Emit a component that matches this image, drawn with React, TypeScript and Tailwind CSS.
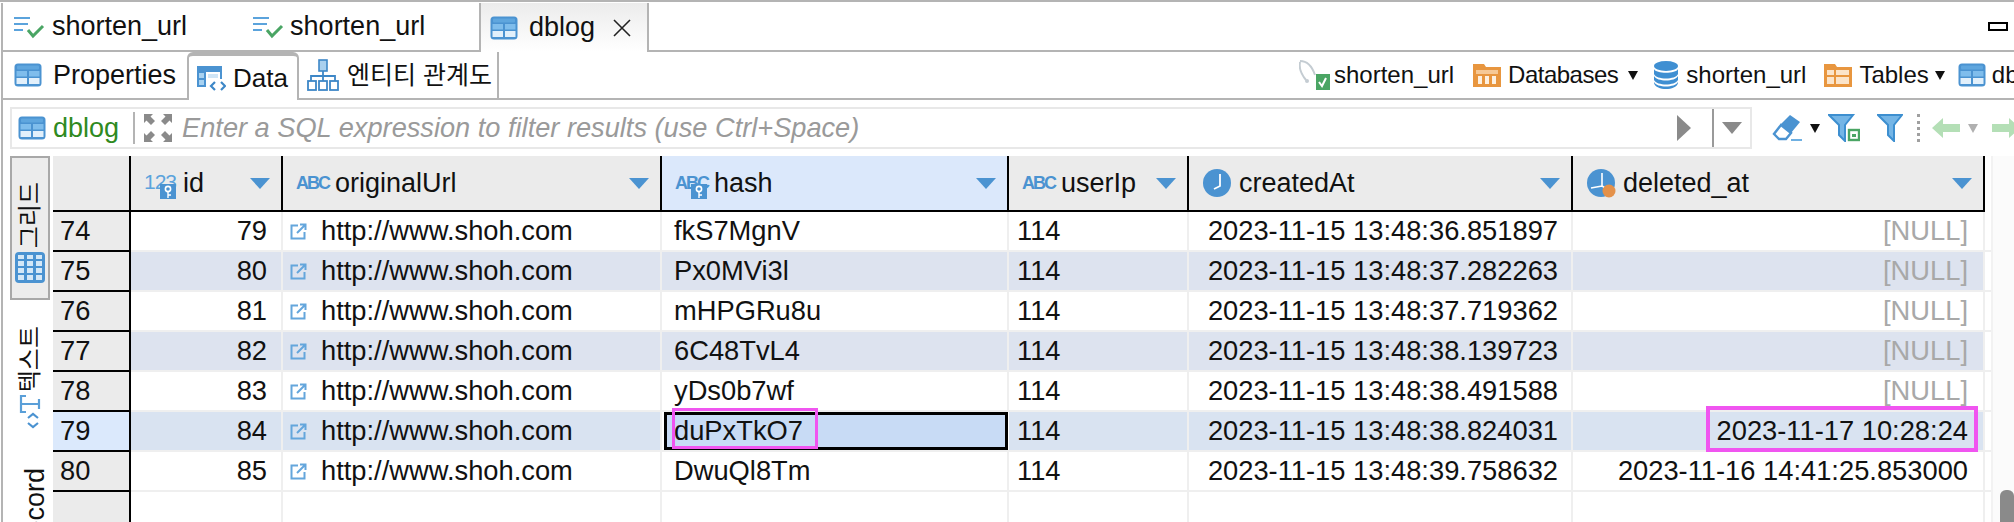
import type { ReactNode } from 'react';

const rows = [
  { no: 74, id: 79, hash: 'fkS7MgnV', created: '2023-11-15 13:48:36.851897', deleted: null },
  { no: 75, id: 80, hash: 'Px0MVi3l', created: '2023-11-15 13:48:37.282263', deleted: null },
  { no: 76, id: 81, hash: 'mHPGRu8u', created: '2023-11-15 13:48:37.719362', deleted: null },
  { no: 77, id: 82, hash: '6C48TvL4', created: '2023-11-15 13:48:38.139723', deleted: null },
  { no: 78, id: 83, hash: 'yDs0b7wf', created: '2023-11-15 13:48:38.491588', deleted: null },
  { no: 79, id: 84, hash: 'duPxTkO7', created: '2023-11-15 13:48:38.824031', deleted: '2023-11-17 10:28:24' },
  { no: 80, id: 85, hash: 'DwuQl8Tm', created: '2023-11-15 13:48:39.758632', deleted: '2023-11-16 14:41:25.853000' },
];

function TableIcon() {
  return (
    <svg width="28" height="24" viewBox="0 0 28 24" className="shrink-0">
      <rect x="0.5" y="0.5" width="27" height="23" rx="3.5" fill="#4b93d1" />
      <rect x="3" y="2.5" width="22" height="4" rx="1" fill="#5fa6de" />
      <rect x="2.5" y="8" width="10.5" height="5.5" fill="#7fbdec" />
      <rect x="15" y="8" width="10.5" height="5.5" fill="#7fbdec" />
      <rect x="2.5" y="15" width="10.5" height="6" fill="#e2f0fb" />
      <rect x="15" y="15" width="10.5" height="6" fill="#e2f0fb" />
    </svg>
  );
}

function ScriptIcon() {
  return (
    <svg width="32" height="24" viewBox="0 0 32 24" className="shrink-0">
      <path d="M1 3h16M1 9h14M1 15h9" stroke="#5ba3dc" strokeWidth="2" fill="none" />
      <path d="M15 15l5 6 10-10" stroke="#4aa564" strokeWidth="3" fill="none" />
    </svg>
  );
}

function DataIcon() {
  return (
    <svg width="30" height="26" viewBox="0 0 30 26" className="shrink-0">
      <path d="M1 1h25v13h-2V7H10v15H1z" fill="#4b93d1" />
      <path d="M3 8h5v5H3zM3 15h5v5H3z" fill="#a8d2f1" />
      <path d="M12 9h10v4H12z" fill="#cfe5f6" />
      <path d="M19 17l-4 4 4 4M25 17l4 4-4 4" stroke="#3d87c7" strokeWidth="2.2" fill="none" />
    </svg>
  );
}

function EntityIcon() {
  return (
    <svg width="32" height="32" viewBox="0 0 32 32" className="shrink-0">
      <rect x="12" y="1" width="8" height="11" fill="#a9d0ee" stroke="#3d87c7" strokeWidth="1.6" />
      <path d="M16 12v5M4 22v-5h24v5M16 17v5" stroke="#3d87c7" strokeWidth="1.8" fill="none" />
      <rect x="1" y="22" width="8" height="9" fill="#fff" stroke="#3d87c7" strokeWidth="1.8" />
      <rect x="12" y="22" width="8" height="9" fill="#fff" stroke="#3d87c7" strokeWidth="1.8" />
      <rect x="23" y="22" width="8" height="9" fill="#fff" stroke="#3d87c7" strokeWidth="1.8" />
    </svg>
  );
}

function ExpandIcon() {
  return (
    <svg width="30" height="30" viewBox="0 0 30 30" className="shrink-0">
      <path d="M1 1h9L7.500 3.500 12 8l-4 4-4.500-4.500L1 10zM29 1v9l-2.500-2.500L22 12l-4-4 4.500-4.500L20 1zM1 29v-9l2.500 2.500L8 18l4 4-4.500 4.500L10 29zM29 29h-9l2.500-2.500L18 22l4-4 4.500 4.500L29 20z" fill="#8a8a8a" />
    </svg>
  );
}

function EraserIcon() {
  return (
    <svg width="32" height="28" viewBox="0 0 32 28" className="shrink-0">
      <path d="M18 1l10 7-9 11-11-8z" fill="#4b93d1" />
      <path d="M9 11l10 8-5 6H7l-5-5z" fill="#fff" stroke="#4b93d1" strokeWidth="2.4" />
      <path d="M19 26h11" stroke="#6fb0e2" strokeWidth="2" />
    </svg>
  );
}

function FunnelIcon({ plus }: { plus?: boolean }) {
  return (
    <svg width={plus ? 32 : 26} height="28" viewBox={plus ? '0 0 32 28' : '0 0 26 28'} className="shrink-0">
      <path d="M1 1h24L17 11v16l-6-6V11z" fill="#74b5e6" stroke="#3d8fd0" strokeWidth="2" />
      {plus && <rect x="21" y="16" width="10" height="10" fill="#fff" stroke="#4aa564" strokeWidth="2.4" />}
      {plus && <rect x="24" y="20" width="4" height="3" fill="#4aa564" />}
    </svg>
  );
}

function ArrowIcon({ right }: { right?: boolean }) {
  return (
    <svg width="28" height="22" viewBox="0 0 28 22" className={right ? 'shrink-0 rotate-180' : 'shrink-0'}>
      <path d="M0 11L11 1v6h17v8H11v6z" fill="#b4dfb6" />
    </svg>
  );
}

function SmallArrow({ color = '#111' }: { color?: string }) {
  return (
    <svg width="10" height="9" viewBox="0 0 10 9" className="shrink-0">
      <path d="M0 0h10L5 9z" fill={color} />
    </svg>
  );
}

function SortArrow() {
  return (
    <svg width="20" height="11" viewBox="0 0 20 11" className="shrink-0">
      <path d="M0 0h20L10 11z" fill="#4b93d1" />
    </svg>
  );
}

function ConnIcon() {
  return (
    <svg width="32" height="30" viewBox="0 0 32 30" className="shrink-0">
      <path d="M1 1c7 0 12 5 15 14M1 2c-1 5 1 12 6 18" stroke="#c4ccd2" strokeWidth="2" fill="none" />
      <circle cx="8" cy="21" r="2" fill="#c4ccd2" />
      <rect x="17" y="14" width="14" height="16" fill="#4aa564" />
      <path d="M20 22l3 4 4-8" stroke="#fff" strokeWidth="2" fill="none" />
    </svg>
  );
}

function DatabasesIcon() {
  return (
    <svg width="28" height="24" viewBox="0 0 28 24" className="shrink-0">
      <path d="M0 1h11l2 3h15v20H0z" fill="#e8963f" />
      <rect x="3" y="7" width="22" height="4" fill="#f6c895" />
      <path d="M5 13h4v8H5zM12 13h4v8h-4zM19 13h4v8h-4z" fill="#fdf0e0" />
    </svg>
  );
}

function DbIcon() {
  return (
    <svg width="26" height="28" viewBox="0 0 26 28" className="shrink-0">
      <ellipse cx="13" cy="5" rx="12" ry="5" fill="#3f8fd2" />
      <path d="M1 8c2 5 22 5 24 0v5c-2 6-22 6-24 0z" fill="#3f8fd2" />
      <path d="M1 15c3 6 21 6 24 0v4c-3 6-21 6-24 0z" fill="#3f8fd2" />
      <path d="M1 21c3 6 21 6 24 0v1c-2 8-22 8-24 0z" fill="#3f8fd2" />
    </svg>
  );
}

function TablesIcon() {
  return (
    <svg width="28" height="24" viewBox="0 0 28 24" className="shrink-0">
      <path d="M0 1h11l2 3h15v20H0z" fill="#e8963f" />
      <path d="M3 7h7v5H3zM12 7h13v5H12zM3 14h7v7H3zM12 14h13v7H12z" fill="#fbe4ca" />
    </svg>
  );
}

function LinkIcon() {
  return (
    <svg width="17" height="17" viewBox="0 0 17 17" className="shrink-0">
      <path d="M8 2.500H1.500v13h13V9" stroke="#64a6dc" strokeWidth="2" fill="none" />
      <path d="M10 1.500h5.500V7M15 2L7 10" stroke="#64a6dc" strokeWidth="2" fill="none" />
    </svg>
  );
}

function KeyBadge() {
  return (
    <span className="absolute right-0 bottom-0 flex h-[15px] w-[16px] items-center justify-center bg-[#4b93d1]">
      <svg width="8" height="13" viewBox="0 0 8 13">
        <circle cx="4" cy="4" r="2.600" stroke="#fff" strokeWidth="1.600" fill="none" />
        <path d="M4 7v6M4 10h3" stroke="#fff" strokeWidth="1.400" />
      </svg>
    </span>
  );
}

function TypeLabel({ text, keyed, small }: { text: string; keyed?: boolean; small?: boolean }) {
  return (
    <span className="relative flex h-[32px] w-[32px] shrink-0 items-start">
      <span className={small ? 'mt-[7px] text-[18px] leading-[18px] font-bold tracking-[-2px] text-[#4b93d1]' : 'mt-[5px] text-[21px] leading-[20px] tracking-[-1px] text-[#5ba3dc]'}>{text}</span>
      {keyed && <KeyBadge />}
    </span>
  );
}

function ClockIcon({ dot }: { dot?: boolean }) {
  return (
    <svg width="30" height="30" viewBox="0 0 30 30" className="shrink-0">
      <circle cx="15" cy="15" r="14" fill="#4b93d1" />
      {dot ? (
        <>
          <path d="M16 5v13M5 20l11-2M16 18l5 3" stroke="#fff" strokeWidth="1.600" fill="none" />
          <circle cx="23" cy="23" r="6.500" fill="#e4914a" />
        </>
      ) : (
        <path d="M18 6v12l-6 3" stroke="#fff" strokeWidth="1.800" fill="none" />
      )}
    </svg>
  );
}

function HeaderCell({ w, icon, label, active }: { w: string; icon: ReactNode; label: string; active?: boolean }) {
  return (
    <div className={`${w} flex h-[56px] shrink-0 items-center border-r-2 border-b-2 border-black pr-[11px] pl-[13px] ${active ? 'bg-[#dbe8fb]' : 'bg-[#ebebeb]'}`}>
      {icon}
      <span className="ml-[7px] flex-1 text-[27px] leading-none">{label}</span>
      <SortArrow />
    </div>
  );
}

function Cell({ w, children, right, bg }: { w: string; children?: ReactNode; right?: boolean; bg: string }) {
  return (
    <div className={`${w} flex h-full shrink-0 items-center border-r-2 border-[#efefef] ${right ? 'justify-end' : ''} ${bg}`}>{children}</div>
  );
}

export default function App() {
  return (
    <div className="relative h-[522px] w-[2014px] overflow-hidden border-t-2 border-[#b4b4b4] bg-white pt-px pl-px font-['Liberation_Sans','Noto_Sans_CJK_KR',sans-serif] text-[#111]">
      <div className="h-full w-[2013px] border-l-2 border-[#b4b4b4]">
        {/* editor tabs */}
        <div className="flex h-[49px] items-stretch">
          <div className="flex w-[476px] shrink-0 items-center border-b-2 border-[#b4b4b4] pl-[10px]">
            <ScriptIcon />
            <span className="ml-[7px] text-[27px] leading-none">shorten_url</span>
            <span className="ml-[65px]"><ScriptIcon /></span>
            <span className="ml-[6px] text-[27px] leading-none">shorten_url</span>
          </div>
          <div className="flex w-[170px] shrink-0 items-center border-r-2 border-l-2 border-[#b4b4b4] bg-gradient-to-b from-[#ececec] to-white pl-[9px]">
            <TableIcon />
            <span className="ml-[11px] text-[27px] leading-none">dblog</span>
            <svg width="18" height="18" viewBox="0 0 18 18" className="ml-[18px]">
              <path d="M1 1l16 16M17 1L1 17" stroke="#222" strokeWidth="1.600" />
            </svg>
          </div>
          <div className="flex flex-1 items-center justify-end border-b-2 border-[#b4b4b4] pr-[3px]">
            <div className="mr-[3px] h-[9px] w-[20px] border-2 border-black bg-white" />
          </div>
        </div>

        {/* sub tabs and breadcrumb */}
        <div className="flex h-[48px] items-stretch border-b-2 border-[#b4b4b4]">
          <div className="flex w-[184px] shrink-0 items-center pl-[11px]">
            <TableIcon />
            <span className="ml-[11px] text-[27px] leading-none">Properties</span>
          </div>
          <div className="-mb-[2px] flex w-[112px] shrink-0 items-center rounded-t-[6px] border-t-[4px] border-r-2 border-l-2 border-[#b4b4b4] bg-white pl-[7px]">
            <DataIcon />
            <span className="ml-[7px] text-[26px] leading-none">Data</span>
          </div>
          <div className="flex w-[200px] shrink-0 items-center border-r-2 border-[#b4b4b4] pl-[8px]">
            <EntityIcon />
            <span className="ml-[8px] text-[25px] leading-none whitespace-nowrap">엔티티 관계도</span>
          </div>
          <div className="flex min-w-0 flex-1 items-center pl-[800px] text-[24px] leading-none whitespace-nowrap">
            <ConnIcon />
            <span className="ml-[3px]">shorten_url</span>
            <span className="ml-[19px]"><DatabasesIcon /></span>
            <span className="ml-[7px] tracking-[-0.5px]">Databases</span>
            <span className="ml-[10px]"><SmallArrow /></span>
            <span className="ml-[15px]"><DbIcon /></span>
            <span className="ml-[7px]">shorten_url</span>
            <span className="ml-[18px]"><TablesIcon /></span>
            <span className="ml-[7px]">Tables</span>
            <span className="ml-[6px]"><SmallArrow /></span>
            <span className="ml-[13px]"><TableIcon /></span>
            <span className="ml-[6px]">db</span>
          </div>
        </div>

        {/* filter bar */}
        <div className="flex h-[56px] items-center pl-[7px]">
          <div className="flex h-[42px] w-[1742px] shrink-0 items-center border-2 border-[#e8e8e8] pl-[6px]">
            <TableIcon />
            <span className="ml-[7px] text-[27px] leading-none text-[#2f8a1f]">dblog</span>
            <div className="ml-[14px] h-[32px] w-[2px] bg-[#b4b4b4]" />
            <span className="ml-[8px]"><ExpandIcon /></span>
            <span className="ml-[9px] flex-1 text-[27.2px] leading-none text-[#9a9a9a] italic">Enter a SQL expression to filter results (use Ctrl+Space)</span>
            <svg width="14" height="26" viewBox="0 0 14 26" className="shrink-0">
              <path d="M0 0l14 13L0 26z" fill="#8a8a8a" />
            </svg>
            <div className="ml-[21px] h-[38px] w-[2px] bg-[#9a9a9a]" />
            <svg width="20" height="12" viewBox="0 0 20 12" className="mr-[8px] ml-[8px] shrink-0">
              <path d="M0 0h20L10 12z" fill="#8a8a8a" />
            </svg>
          </div>
          <div className="ml-[20px] flex items-center">
            <EraserIcon />
            <span className="ml-[6px]"><SmallArrow /></span>
            <span className="ml-[8px]"><FunnelIcon plus /></span>
            <span className="ml-[17px]"><FunnelIcon /></span>
            <div className="ml-[14px] h-[28px] w-0 border-l-[3px] border-dotted border-[#a0a0a0]" />
            <span className="ml-[12px]"><ArrowIcon /></span>
            <span className="ml-[8px]"><SmallArrow color="#b0b0b0" /></span>
            <span className="ml-[14px]"><ArrowIcon right /></span>
          </div>
        </div>

        {/* body */}
        <div className="flex h-[367px] items-start">
          {/* view switcher */}
          <div className="flex w-[50px] shrink-0 flex-col items-center pl-[3px] text-[24px] leading-none">
            <div className="flex h-[144px] w-[40px] flex-col items-center justify-end gap-[4px] border-2 border-[#a8a8a8] bg-[#ececec] pb-[15px]">
              <span className="rotate-180 [text-orientation:sideways] [writing-mode:vertical-rl]">그리드</span>
              <svg width="30" height="31" viewBox="0 0 30 31" className="shrink-0">
                <rect width="30" height="31" rx="4" fill="#4b93d1" />
                <path d="M3 9h6v5H3zM12 9h6v5h-6zM21 9h6v5h-6zM3 16h6v5H3zM12 16h6v5h-6zM21 16h6v5h-6zM3 23h6v5H3zM12 23h6v5h-6zM21 23h6v5h-6zM3 3h6v4H3zM12 3h6v4h-6zM21 3h6v4h-6z" fill="#d5e8f7" />
              </svg>
            </div>
            <div className="mt-[26px] flex w-[40px] flex-col items-center gap-[3px]">
              <span className="rotate-180 [text-orientation:sideways] [writing-mode:vertical-rl]">텍스트</span>
              <svg width="22" height="34" viewBox="0 0 22 34" className="shrink-0">
                <path d="M7 1H2v16h5M2 9h18M20 4v10" stroke="#5a9fd8" strokeWidth="2.2" fill="none" />
                <path d="M9 23l5-4 5 4M9 28l5 4 5-4" stroke="#4b93d1" strokeWidth="2.2" fill="none" />
              </svg>
            </div>
            <div className="mt-[39px] flex w-[40px] items-start justify-center">
              <span className="ml-[12px] rotate-180 text-[27px] [text-orientation:sideways] [writing-mode:vertical-rl]">Record</span>
            </div>
          </div>

          {/* result grid */}
          <div className="w-[1932px] shrink-0">
            <div className="flex">
              <div className="h-[56px] w-[78px] shrink-0 border-r-2 border-b-2 border-black bg-[#ebebeb]" />
              <HeaderCell w="w-[152px]" icon={<TypeLabel text="123" keyed />} label="id" />
              <HeaderCell w="w-[379px]" icon={<TypeLabel text="ABC" small />} label="originalUrl" />
              <HeaderCell w="w-[347px]" icon={<TypeLabel text="ABC" small keyed />} label="hash" active />
              <HeaderCell w="w-[180px]" icon={<TypeLabel text="ABC" small />} label="userIp" />
              <HeaderCell w="w-[384px]" icon={<ClockIcon />} label="createdAt" />
              <HeaderCell w="w-[412px]" icon={<ClockIcon dot />} label="deleted_at" />
            </div>
            {rows.map((r, i) => {
              const selected = r.no === 79;
              const bg = selected ? 'bg-[#d9e3f1]' : i % 2 === 1 ? 'bg-[#dde3ef]' : 'bg-white';
              return (
                <div key={r.no} className="flex h-[40px] border-b-2 border-[#efefef] text-[27.3px] leading-none">
                  <div className={`-mb-[2px] flex h-[40px] w-[78px] shrink-0 items-center border-r-2 border-b-2 border-black pl-[7px] ${selected ? 'bg-[#dbe9fc]' : 'bg-[#ebebeb]'}`}>{r.no}</div>
                  <Cell w="w-[152px]" right bg={bg}><span className="pr-[14px]">{r.id}</span></Cell>
                  <Cell w="w-[379px]" bg={bg}>
                    <span className="ml-[7px]"><LinkIcon /></span>
                    <span className="ml-[14px]">http://www.shoh.com</span>
                  </Cell>
                  {selected ? (
                    <div className="mr-px ml-[2px] flex h-[38px] w-[344px] shrink-0 items-center border-[3px] border-black bg-[#c8dbf5] pl-[7px]">{r.hash}</div>
                  ) : (
                    <Cell w="w-[347px]" bg={bg}><span className="ml-[12px]">{r.hash}</span></Cell>
                  )}
                  <Cell w="w-[180px]" bg={bg}><span className="ml-[8px]">114</span></Cell>
                  <Cell w="w-[384px]" right bg={bg}><span className="pr-[13px]">{r.created}</span></Cell>
                  <Cell w="w-[412px]" right bg={bg}>
                    {r.deleted ? <span className="pr-[15px]">{r.deleted}</span> : <span className="pr-[15px] text-[#a8a8a8]">[NULL]</span>}
                  </Cell>
                </div>
              );
            })}
            <div className="flex h-[40px]">
              <div className="w-[78px] shrink-0 border-r-2 border-black bg-[#ebebeb]" />
              <div className="w-[152px] shrink-0 border-r-2 border-[#efefef]" />
              <div className="w-[379px] shrink-0 border-r-2 border-[#efefef]" />
              <div className="w-[347px] shrink-0 border-r-2 border-[#efefef]" />
              <div className="w-[180px] shrink-0 border-r-2 border-[#efefef]" />
              <div className="w-[384px] shrink-0 border-r-2 border-[#efefef]" />
              <div className="w-[412px] shrink-0 border-r-2 border-[#efefef]" />
            </div>
          </div>

          {/* spare strip right of the last column */}
          <div className="h-full w-[8px] shrink-0 border-r-2 border-[#f2f2f2] pt-[56px]">
            {rows.map((r) => (
              <div key={r.no} className="h-[40px] border-b-2 border-[#efefef]" />
            ))}
          </div>

          {/* scrollbar gutter */}
          <div className="relative h-full flex-1 bg-[#fbfbfb]">
            <div className="absolute top-[334px] right-0 h-[40px] w-[14px] rounded-[6px] bg-[#8a8a8a]" />
          </div>
        </div>
      </div>

      {/* annotation boxes */}
      <div className="absolute top-[406px] left-[672px] h-[41px] w-[146px] border-[3px] border-[#f055f0]" />
      <div className="absolute top-[404px] left-[1706px] h-[46px] w-[272px] border-4 border-[#f055f0]" />
    </div>
  );
}
